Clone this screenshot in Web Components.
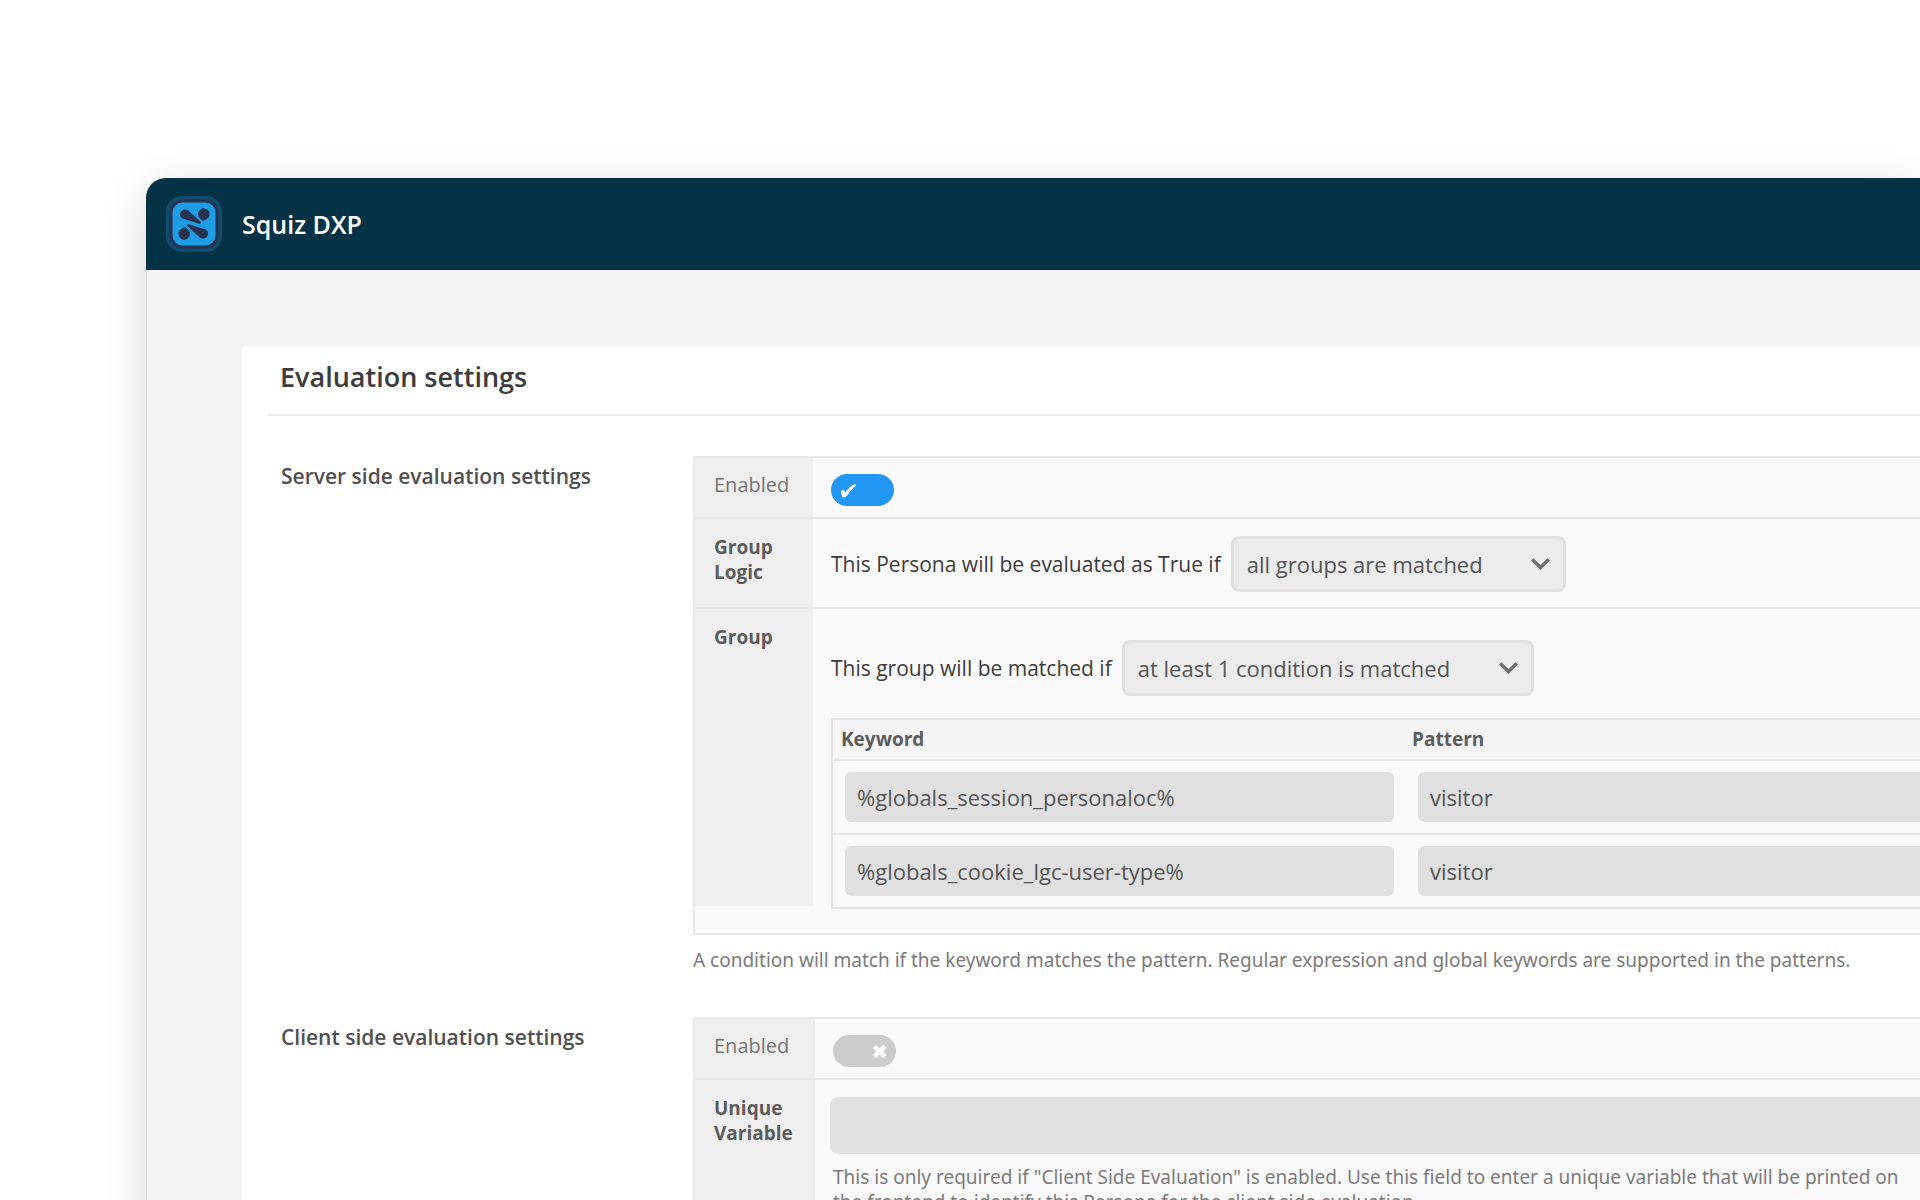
<!DOCTYPE html>
<html lang="en">
<head>
<meta charset="UTF-8">
<meta name="viewport" content="width=device-width, initial-scale=1.0">
<title>Squiz DXP</title>
<style>
    html, body {
        margin: 0;
        height: 100%;
    }
    body {
        overflow: hidden;
        background: #ffffff;
        color: #3c3c3c;
        font-family: "Open Sans", "Noto Sans", sans-serif;
        font-size: 22px;
    }
    .wide {
        --label-width: 120px;
    }
</style>
</head>
<body>

<dxp-window product="Squiz DXP">
    <settings-panel heading="Evaluation settings">
        <settings-section heading="Server side evaluation settings">
            <toggle-row label="Enabled" checked></toggle-row>
            <settings-row label="Group Logic">
                <match-select label="This Persona will be evaluated as True if" value="all groups are matched"></match-select>
            </settings-row>
            <settings-row label="Group" class="group">
                <match-select label="This group will be matched if" value="at least 1 condition is matched"></match-select>
                <condition-table></condition-table>
            </settings-row>
            <span slot="help">A condition will match if the keyword matches the pattern. Regular expression and global keywords are supported in the patterns.</span>
        </settings-section>
        <settings-section heading="Client side evaluation settings" class="wide">
            <toggle-row label="Enabled"></toggle-row>
            <text-row label="Unique Variable">This is only required if "Client Side Evaluation" is enabled. Use this field to enter a unique variable that will be printed on the frontend to identify this Persona for the client side evaluation.</text-row>
        </settings-section>
    </settings-panel>
</dxp-window>

<script>
// shared look of a row: grey label column + content
const rowStyles = `
    :host {
        display: grid;
        grid-template-columns: var(--label-width, 118px) minmax(0, 1fr);
        border-top: 2px solid #e7e7e7;
    }
    .label {
        box-sizing: border-box;
        padding: 16px 12px 14px 19px;
        background: #efefef;
        color: #5c5c5c;
        font-size: 19px;
        font-weight: 700;
        line-height: 25px;
    }
    .content {
        padding-left: 18px;
    }
`;

class DxpWindow extends HTMLElement {
    constructor() {
        super();
        this.attachShadow({ mode: "open" });
    }

    connectedCallback() {
        this.shadowRoot.innerHTML = `
        <style>
            :host {
                display: flex;
                flex-direction: column;
                box-sizing: border-box;
                min-height: calc(100vh - 178px);
                margin: 178px 0 0 146px;
                border-radius: 20px 0 0 0;
                background: #f4f4f4;
                box-shadow: 0 12px 44px rgba(0, 0, 0, 0.16);
            }
            header {
                display: flex;
                align-items: center;
                gap: 20px;
                padding: 18px 20px;
                border-radius: 20px 0 0 0;
                background: #053245;
                color: #ffffff;
            }
            svg {
                display: block;
                width: 56px;
                height: 56px;
            }
            .name {
                font-size: 25px;
                font-weight: 600;
                line-height: 34px;
            }
            main {
                flex: 1;
                padding: 76px 0 0 95px;
                border-left: 1px solid #dadada;
            }
        </style>
        <header>
            <svg viewBox="0 0 56 56" aria-hidden="true">
                <rect width="56" height="56" rx="16" fill="#0f4c6d"/>
                <rect x="3.4" y="3.4" width="49.2" height="49.2" rx="13" fill="#27324f"/>
                <rect x="6.5" y="6.5" width="43" height="43" rx="10" fill="#1f9ce6"/>
                <g fill="#27324f">
                    <path d="M21.8 14.3 L34.4 25.6 Q35.8 28 33.2 27.7 L16.2 22.6 A5 5 0 1 1 21.8 14.3Z"/>
                    <path d="M34.2 22.6 A5.8 5.8 0 1 1 40 23.5 Q38.2 24.8 36.6 24.7Z"/>
                    <g transform="rotate(180 28 28)">
                        <path d="M21.8 14.3 L34.4 25.6 Q35.8 28 33.2 27.7 L16.2 22.6 A5 5 0 1 1 21.8 14.3Z"/>
                        <path d="M34.2 22.6 A5.8 5.8 0 1 1 40 23.5 Q38.2 24.8 36.6 24.7Z"/>
                    </g>
                </g>
            </svg>
            <span class="name">${this.getAttribute("product")}</span>
        </header>
        <main><slot></slot></main>
        `;
    }
}

class SettingsPanel extends HTMLElement {
    constructor() {
        super();
        this.attachShadow({ mode: "open" });
    }

    connectedCallback() {
        this.shadowRoot.innerHTML = `
        <style>
            :host {
                display: block;
                padding: 13px 0 0 26px;
                border-radius: 5px 0 0 0;
                background: #ffffff;
            }
            h1 {
                margin: 0;
                padding: 0 0 19px 12px;
                border-bottom: 2px solid #ececec;
                color: #3c3c3c;
                font-size: 27px;
                font-weight: 600;
                line-height: 36px;
            }
            .sections {
                display: flex;
                flex-direction: column;
                gap: 44px;
                padding: 40px 0 0 13px;
            }
        </style>
        <h1>${this.getAttribute("heading")}</h1>
        <div class="sections"><slot></slot></div>
        `;
    }
}

class SettingsSection extends HTMLElement {
    constructor() {
        super();
        this.attachShadow({ mode: "open" });
    }

    connectedCallback() {
        this.shadowRoot.innerHTML = `
        <style>
            :host {
                display: grid;
                grid-template-columns: 412px minmax(0, 1fr);
            }
            h2 {
                margin: 0;
                padding-top: 5px;
                color: #505050;
                font-size: 21px;
                font-weight: 600;
                line-height: 30px;
            }
            .box {
                border: 2px solid #e7e7e7;
                border-top: 0;
                border-right: 0;
                background: #fafafa;
            }
            ::slotted([slot="help"]) {
                display: block;
                padding-top: 13px;
                color: #7a7a7a;
                font-family: "Noto Sans", sans-serif;
                font-size: 19px;
                line-height: 25px;
            }
        </style>
        <h2>${this.getAttribute("heading")}</h2>
        <div>
            <div class="box"><slot></slot></div>
            <slot name="help"></slot>
        </div>
        `;
    }
}

class SettingsRow extends HTMLElement {
    constructor() {
        super();
        this.attachShadow({ mode: "open" });
    }

    connectedCallback() {
        this.shadowRoot.innerHTML = `
        <style>
            ${rowStyles}
            .content {
                padding-top: 17px;
                padding-bottom: 15px;
            }
            :host(.group) .label {
                margin-bottom: 27px;
            }
            :host(.group) .content {
                display: flex;
                flex-direction: column;
                gap: 22px;
                padding-top: 31px;
                padding-bottom: 24px;
            }
        </style>
        <div class="label">${this.getAttribute("label")}</div>
        <div class="content"><slot></slot></div>
        `;
    }
}

class ToggleRow extends HTMLElement {
    constructor() {
        super();
        this.attachShadow({ mode: "open" });
    }

    connectedCallback() {
        const checked = this.hasAttribute("checked");
        this.shadowRoot.innerHTML = `
        <style>
            ${rowStyles}
            .label {
                padding-top: 14px;
                color: #757575;
                font-size: 20px;
                font-weight: 400;
            }
            .content {
                display: grid;
                justify-content: start;
                padding-top: 16px;
                padding-bottom: 11px;
            }
            input, svg {
                grid-area: 1 / 1;
                width: 63px;
                height: 32px;
                margin: 0;
            }
            input {
                appearance: none;
                border-radius: 16px;
                background: #cccccc;
                cursor: pointer;
            }
            input:checked {
                background: #2196f3;
            }
            svg {
                pointer-events: none;
            }
            .on {
                fill: #ffffff;
            }
            .off {
                fill: none;
                stroke: #ffffff;
                stroke-width: 4.6;
            }
            input:checked ~ svg .off, input:not(:checked) ~ svg .on {
                display: none;
            }
        </style>
        <label class="label" for="toggle">${this.getAttribute("label")}</label>
        <div class="content">
            <input type="checkbox" id="toggle" ${checked ? "checked" : ""}>
            <svg viewBox="0 0 63 32" aria-hidden="true">
                <path class="on" d="M10 17 Q11.6 15 13.4 16.2 L14 18.8 Q18 12.8 22.6 10.4 Q24.8 9.8 25 11.4 Q20 15.4 16 21.4 Q14.4 24 12.2 23.4 Q10.6 23 10 17Z"/>
                <path class="off" d="M41.6 11.4 L51.9 21.7 M51.9 11.4 L41.6 21.7"/>
            </svg>
        </div>
        `;
    }
}

class MatchSelect extends HTMLElement {
    constructor() {
        super();
        this.attachShadow({ mode: "open" });
    }

    connectedCallback() {
        this.shadowRoot.innerHTML = `
        <style>
            :host {
                display: flex;
                align-items: center;
                gap: 10px;
            }
            label {
                color: #3c3c3c;
                font-size: 21px;
                line-height: 30px;
            }
            .select {
                display: grid;
                align-items: center;
            }
            select, svg {
                grid-area: 1 / 1;
            }
            select {
                appearance: none;
                box-sizing: border-box;
                height: 56px;
                padding: 0 80px 0 13px;
                border: 3px solid #e0e0e0;
                border-radius: 8px;
                background: #ececec;
                color: #555555;
                font: inherit;
                font-size: 22px;
            }
            svg {
                justify-self: end;
                width: 19px;
                height: 12px;
                margin-right: 16px;
                pointer-events: none;
            }
        </style>
        <label for="match">${this.getAttribute("label")}</label>
        <div class="select">
            <select id="match">
                <option>${this.getAttribute("value")}</option>
            </select>
            <svg viewBox="0 0 19 12" aria-hidden="true">
                <path d="M1.3 1.4 L9.5 9.5 L17.7 1.4" fill="none" stroke="#6e6e6e" stroke-width="3.4"/>
            </svg>
        </div>
        `;
    }
}

class ConditionTable extends HTMLElement {
    constructor() {
        super();
        this.attachShadow({ mode: "open" });
        this.conditions = [
            { keyword: "%globals_session_personaloc%", pattern: "visitor" },
            { keyword: "%globals_cookie_lgc-user-type%", pattern: "visitor" }
        ];
    }

    connectedCallback() {
        this.shadowRoot.innerHTML = `
        <style>
            :host {
                display: block;
            }
            table {
                width: 100%;
                table-layout: fixed;
                border: 2px solid #e4e4e4;
                border-right: 0;
                border-collapse: separate;
                border-spacing: 0;
            }
            th {
                padding: 7px 8px;
                background: #f5f5f5;
                color: #5c5c5c;
                font-size: 19px;
                font-weight: 700;
                line-height: 25px;
                text-align: left;
            }
            th:first-child {
                width: 555px;
            }
            td {
                padding: 11px 10px 11px 12px;
                border-top: 2px solid #e7e7e7;
            }
            td:last-child {
                padding-left: 14px;
                padding-right: 0;
            }
            input {
                display: block;
                box-sizing: border-box;
                width: 100%;
                height: 50px;
                padding: 0 12px;
                border: 0;
                border-radius: 6px;
                background: #e0e0e0;
                color: #555555;
                font: inherit;
                font-size: 22px;
            }
            td:last-child input {
                border-radius: 6px 0 0 6px;
            }
        </style>
        <table>
            <thead>
                <tr>
                    <th id="keyword" scope="col">Keyword</th>
                    <th id="pattern" scope="col">Pattern</th>
                </tr>
            </thead>
            <tbody>
                ${this.conditions.map((c) => `
                <tr>
                    <td><input type="text" aria-labelledby="keyword" value="${c.keyword}"></td>
                    <td><input type="text" aria-labelledby="pattern" value="${c.pattern}"></td>
                </tr>`).join("")}
            </tbody>
        </table>
        `;
    }
}

class TextRow extends HTMLElement {
    constructor() {
        super();
        this.attachShadow({ mode: "open" });
    }

    connectedCallback() {
        this.shadowRoot.innerHTML = `
        <style>
            ${rowStyles}
            .content {
                padding: 17px 0 24px 15px;
            }
            input {
                display: block;
                box-sizing: border-box;
                width: 100%;
                height: 57px;
                padding: 0 12px;
                border: 0;
                border-radius: 8px 0 0 8px;
                background: #e0e0e0;
                color: #555555;
                font: inherit;
                font-size: 22px;
            }
            p {
                margin: 0;
                padding: 11px 0 0 3px;
                color: #7a7a7a;
                font-family: "Noto Sans", sans-serif;
                font-size: 19px;
                line-height: 25px;
            }
        </style>
        <label class="label" for="field">${this.getAttribute("label")}</label>
        <div class="content">
            <input type="text" id="field" aria-describedby="hint">
            <p id="hint"><slot></slot></p>
        </div>
        `;
    }
}

customElements.define("dxp-window", DxpWindow);
customElements.define("settings-panel", SettingsPanel);
customElements.define("settings-section", SettingsSection);
customElements.define("settings-row", SettingsRow);
customElements.define("toggle-row", ToggleRow);
customElements.define("match-select", MatchSelect);
customElements.define("condition-table", ConditionTable);
customElements.define("text-row", TextRow);
</script>
</body>
</html>
